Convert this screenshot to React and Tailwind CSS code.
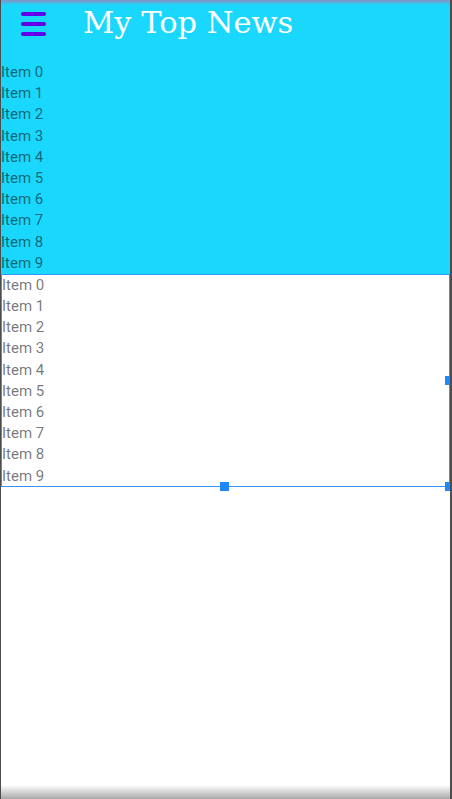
import React from "react";

const items = Array.from({ length: 10 }, (_, i) => `Item ${i}`);

export default function App() {
  return (
    <div className="relative w-[452px] h-[799px] overflow-hidden bg-white border-l border-r-2 border-[#4d4d4d]" style={{ fontFamily: "Roboto, 'Noto Sans', sans-serif" }}>
      <div className="bg-[#1ad7fe]">
        <div className="h-[48px] flex items-center">
          <div className="ml-[20px] w-[25px] flex flex-col gap-[6.5px]">
            <div className="h-[3.5px] rounded-full bg-[#6200ea]" />
            <div className="h-[3.5px] rounded-full bg-[#6200ea]" />
            <div className="h-[3.5px] rounded-full bg-[#6200ea]" />
          </div>
          <div className="ml-[37px] text-white text-[30.5px] leading-none -mt-[2px]" style={{ fontFamily: "'DejaVu Serif', 'Liberation Serif', serif" }}>
            My Top News
          </div>
        </div>
        <div className="pt-[14px]">
          {items.map((t) => (
            <div key={t} className="h-[21.2px] leading-[21.2px] text-[15px] text-black/55">{t}</div>
          ))}
        </div>
      </div>
      <div className="relative border border-[#3393ff] h-[213px]">
        {items.map((t) => (
          <div key={t} className="h-[21.2px] leading-[21.2px] text-[15px] text-black/55">{t}</div>
        ))}
        <div className="absolute right-[-5px] top-[101px] w-[9px] h-[9px] bg-[#1e88ff]" />
        <div className="absolute left-[218px] bottom-[-5px] w-[9px] h-[9px] bg-[#1e88ff]" />
        <div className="absolute right-[-5px] bottom-[-5px] w-[9px] h-[9px] bg-[#1e88ff]" />
      </div>
      <div className="absolute top-0 left-0 right-0 h-[5px] bg-gradient-to-b from-[#8a8fbf] to-transparent" />
      <div className="absolute bottom-0 left-0 right-0 h-[14px] bg-gradient-to-b from-transparent to-[#a8a8a8]" />
    </div>
  );
}
